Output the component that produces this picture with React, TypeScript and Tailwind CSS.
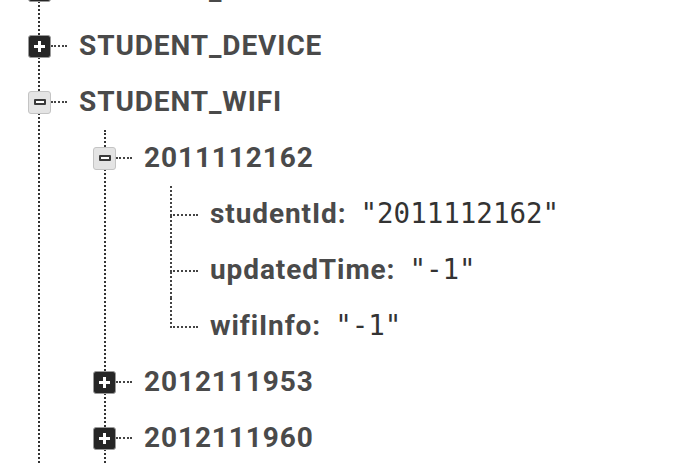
import React from "react";

const label = "font-['Roboto'] font-bold text-[28px] leading-none text-[#4a4a4a] tracking-[0.9px]";
const value = "font-['DejaVu_Sans_Mono',monospace] text-[27.5px] leading-none text-[#333] ml-[14px]";

const PlusBox = ({ className = "" }: { className?: string }) => (
  <div className={`flex h-[23px] w-[23px] shrink-0 items-center justify-center rounded-[3px] border border-[#9a9a9a] bg-[#262626] ${className}`}>
    <svg width="11" height="11" viewBox="0 0 11 11">
      <path d="M4 0h3v4h4v3H7v4H4V7H0V4h4z" fill="#fff" />
    </svg>
  </div>
);

const MinusBox = ({ className = "" }: { className?: string }) => (
  <div className={`flex h-[23px] w-[23px] shrink-0 items-center justify-center rounded-[3px] border border-[#c4c4c4] bg-[#e4e4e4] ${className}`}>
    <div className="h-[6px] w-[12px] rounded-[1px] border-2 border-[#3a3a3a] bg-white" />
  </div>
);

const Connector = () => <div className="w-[16px] shrink-0 border-t-2 border-dotted border-[#444]" />;

type NodeProps = { open?: boolean; name: string; level: 0 | 1 };

const Node = ({ open, name, level }: NodeProps) => (
  <div className="flex h-14 items-center">
    {open ? (
      <MinusBox className={level === 0 ? "-ml-[12px]" : "-ml-[13px]"} />
    ) : (
      <PlusBox className={level === 0 ? "-ml-[12px]" : "-ml-[13px]"} />
    )}
    <Connector />
    <span className={`ml-[12px] ${label}`}>{name}</span>
  </div>
);

const Leaf = ({ name, val, last }: { name: string; val: string; last?: boolean }) => (
  <div className="flex h-14 items-stretch">
    <div className="flex w-[28px] shrink-0 flex-col">
      <div className="h-[30px] border-b-2 border-l-2 border-dotted border-[#444]" />
      <div className={`flex-1 ${last ? "" : "border-l-2 border-dotted border-[#444]"}`} />
    </div>
    <div className="ml-[12px] flex items-center">
      <span className={label}>{name}:</span>
      <span className={value}>"{val}"</span>
    </div>
  </div>
);

export default function App() {
  return (
    <div className="h-[464px] w-[700px] overflow-hidden bg-white">
      <div className="-mt-[38px] ml-[38px] border-l-2 border-dotted border-[#333]">
        <Node name="STUDENT_ID" level={0} />
        <Node name="STUDENT_DEVICE" level={0} />
        <Node name="STUDENT_WIFI" level={0} open />
        <div className="ml-[64px] border-l-2 border-dotted border-[#333] pb-10">
          <Node name="2011112162" level={1} open />
          <div className="ml-[64px]">
            <Leaf name="studentId" val="2011112162" />
            <Leaf name="updatedTime" val="-1" />
            <Leaf name="wifiInfo" val="-1" last />
          </div>
          <Node name="2012111953" level={1} />
          <Node name="2012111960" level={1} />
        </div>
      </div>
    </div>
  );
}
